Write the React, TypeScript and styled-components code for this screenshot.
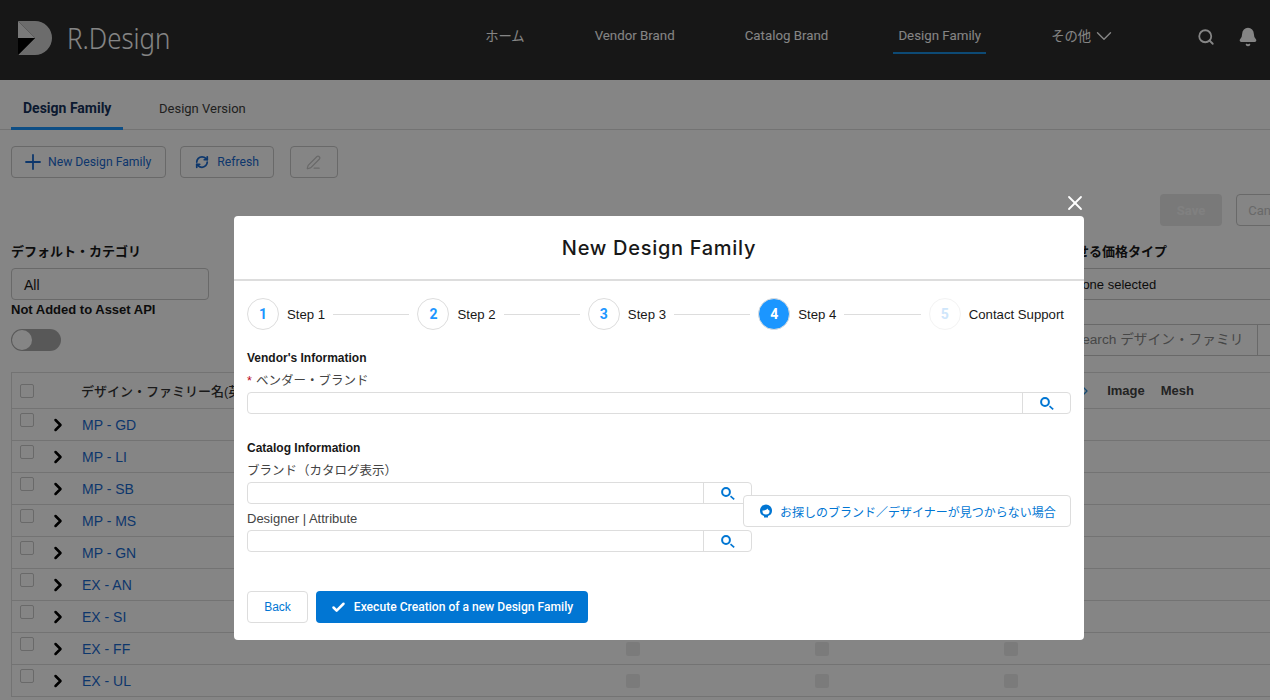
import styled, { createGlobalStyle } from 'styled-components';
import { Bell, ChevronDown, ChevronRight, PenLine, Plus, RefreshCw, Search, X, Check } from 'lucide-react';

const GlobalStyle = createGlobalStyle`
  html, body {
    margin: 0;
    padding: 0;
    height: 100%;
    overflow: hidden;
    background: #fff;
    font-family: Roboto, "Liberation Sans", "Noto Sans CJK JP", sans-serif;
  }
  * { box-sizing: border-box; }
`;

const Page = styled.div`
  width: 1270px;
  height: 700px;
  overflow: hidden;
  position: relative;
  background: #fff;
`;

const Header = styled.header`
  height: 80px;
  background: #2c2c2c;
  display: flex;
  align-items: flex-start;
  padding: 21px 12px 0 18px;
  color: #fff;
`;

const Brand = styled.div`
  display: flex;
  align-items: center;
  gap: 14px;
  height: 34px;
`;

const BrandName = styled.span`
  margin-top: -2px;
  font-family: "Noto Sans", sans-serif;
  font-weight: 300;
  font-size: 29px;
  color: #fff;
  transform: scaleX(0.89);
  transform-origin: left center;
`;

const Nav = styled.nav`
  display: flex;
  gap: 60px;
  margin-left: 297px;
  height: 34px;
`;

const NavItem = styled.a<{ $active?: boolean }>`
  display: flex;
  align-items: center;
  height: 33px;
  padding: 0 5px 2px;
  font-size: 13.3px;
  color: #fff;
  border-bottom: 2px solid ${p => (p.$active ? '#1a8fe0' : 'transparent')};
`;

const HeaderIcons = styled.div`
  margin-left: auto;
  display: flex;
  gap: 23px;
  align-items: center;
  height: 32px;
`;

const Tabs = styled.div`
  height: 50px;
  display: flex;
  padding-left: 11px;
  border-bottom: 1px solid #ddd;
`;

const Tab = styled.div<{ $active?: boolean }>`
  height: 50px;
  width: ${p => (p.$active ? '112px' : 'auto')};
  margin-right: ${p => (p.$active ? '36px' : '0')};
  padding: 0 ${p => (p.$active ? '12px' : '0')};
  line-height: 57px;
  font-size: ${p => (p.$active ? '14px' : '13px')};
  font-weight: ${p => (p.$active ? 700 : 400)};
  white-space: nowrap;
  color: ${p => (p.$active ? '#16325c' : '#3e3e3c')};
  border-bottom: ${p => (p.$active ? '3px solid #1b96ff' : 'none')};
`;

const Toolbar = styled.div`
  display: flex;
  gap: 14px;
  padding: 16px 11px 0;
  height: 64px;
`;

const ToolButton = styled.button`
  height: 32px;
  display: flex;
  align-items: center;
  justify-content: center;
  gap: 8px;
  padding: 0 14px;
  background: #fff;
  border: 1px solid #c9c9c9;
  border-radius: 4px;
  font: 12.2px Roboto, sans-serif;
  color: #1a6ad0;
`;

const NewButton = styled(ToolButton)`
  gap: 3px;
  padding: 0 14px 0 9px;
`;

const EditButton = styled(ToolButton)`
  width: 48px;
  margin-left: 2px;
  color: #c9c9c9;
`;

const SaveRow = styled.div`
  display: flex;
  justify-content: flex-end;
  gap: 14px;
  height: 32px;
  margin-right: -30px;
`;

const SaveButton = styled.button`
  width: 62px;
  height: 32px;
  border: none;
  border-radius: 4px;
  background: #e8e8e8;
  color: #f6f6f6;
  font: 700 13px Roboto, sans-serif;
`;

const CancelButton = styled.button`
  width: 64px;
  height: 32px;
  border: 1px solid #c9c9c9;
  border-radius: 4px;
  background: #fff;
  color: #c9c9c9;
  font: 13px Roboto, sans-serif;
`;

const Filters = styled.div`
  display: flex;
  justify-content: space-between;
  padding-left: 11px;
  margin-top: 17px;
`;

const FilterLabel = styled.div`
  font: 700 13px "Liberation Sans", "Noto Sans CJK JP", sans-serif;
  color: #181818;
  height: 18px;
  line-height: 18px;
  white-space: nowrap;
`;

const FilterBox = styled.div`
  width: 198px;
  height: 32px;
  margin-top: 7px;
  border: 1px solid #c9c9c9;
  border-radius: 4px;
  padding-left: 12px;
  font: 14px/32px "Liberation Sans", sans-serif;
  color: #181818;
`;

const WideFilterBox = styled(FilterBox)`
  width: 260px;
  padding-left: 35px;
  font-size: 13px;
`;

const PriceFilter = styled.div`
  width: 233px;
`;

const SubRow = styled.div`
  display: flex;
  justify-content: space-between;
  padding-left: 11px;
`;

const AssetLabel = styled.div`
  margin-top: 1px;
  font: 700 13px/18px "Liberation Sans", sans-serif;
  color: #181818;
`;

const Toggle = styled.div`
  width: 50px;
  height: 22px;
  margin-top: 10px;
  border-radius: 11px;
  background: #aaa;
  padding: 1px;
`;

const ToggleKnob = styled.div`
  width: 20px;
  height: 20px;
  border-radius: 50%;
  background: #fff;
`;

const SearchGroup = styled.div`
  width: 210px;
  height: 32px;
  margin-top: 24px;
  display: flex;
`;

const SearchBox = styled.div`
  flex: none;
  width: 198px;
  padding-left: 12px;
  border: 1px solid #c9c9c9;
  font: 13.7px/30px "Liberation Sans", "Noto Sans CJK JP", sans-serif;
  color: #888;
  white-space: nowrap;
`;

const SearchAddon = styled.div`
  flex: 1;
  border-top: 1px solid #c9c9c9;
  border-bottom: 1px solid #c9c9c9;
`;

const Table = styled.div`
  margin: 16px 0 0 11px;
  border-left: 1px solid #ddd;
  border-top: 1px solid #ddd;
`;

const Row = styled.div<{ $head?: boolean }>`
  height: ${p => (p.$head ? '36px' : '32px')};
  display: flex;
  align-items: center;
  border-bottom: 1px solid #ddd;
  font: ${p => (p.$head ? '700 13px' : '14px')} "Liberation Sans", "Noto Sans CJK JP", sans-serif;
  color: ${p => (p.$head ? '#444' : '#1a6ad0')};
`;

const CheckBox = styled.span<{ $head?: boolean }>`
  display: block;
  flex: none;
  width: 14px;
  height: 14px;
  margin: ${p => (p.$head ? '0' : '-10px')} 0 0 8px;
  border: 1px solid #c9c9c9;
  border-radius: 2px;
  background: #fff;
`;

const Expand = styled.span`
  display: flex;
  flex: none;
  width: 48px;
  padding-left: 14px;
  color: #000;
`;

const HeadName = styled.span`
  margin-left: 47px;
  font-weight: 500;
  color: #333;
`;

const GreyCells = styled.div`
  margin-left: auto;
  margin-right: 252px;
  display: flex;
  gap: 175px;
`;

const GreyCell = styled.span`
  width: 14px;
  height: 14px;
  border-radius: 2px;
  background: #ececec;
`;

const HeadExtras = styled.div`
  margin-left: auto;
  margin-right: 76px;
  display: flex;
  align-items: center;
  gap: 16px;
`;

const SortMark = styled.span`
  display: flex;
  margin-right: -2px;
  color: #2b8fd8;
`;

const Backdrop = styled.div`
  position: absolute;
  inset: 0;
  background: rgba(0, 0, 0, 0.48);
`;

const CloseButton = styled.span`
  position: absolute;
  left: 1063px;
  top: 191px;
  color: #fff;
  display: flex;
`;

const Modal = styled.div`
  position: absolute;
  left: 234px;
  top: 216px;
  width: 850px;
  height: 424px;
  background: #fff;
  border-radius: 4px;
  font-family: "Liberation Sans", "Noto Sans CJK JP", sans-serif;
`;

const ModalHeader = styled.div`
  height: 65px;
  border-bottom: 2px solid #ddd;
  text-align: center;
  font: 500 20px/64px Inter, sans-serif;
  letter-spacing: 0.7px;
  color: #181818;
`;

const ModalBody = styled.div`
  padding: 17px 13px 0;
`;

const Steps = styled.div`
  display: flex;
  align-items: center;
  height: 32px;
  margin-right: -1px;
`;

const StepCircle = styled.span<{ $active?: boolean; $future?: boolean }>`
  flex: none;
  width: 32px;
  height: 32px;
  border-radius: 50%;
  display: flex;
  align-items: center;
  justify-content: center;
  font: 700 14px Roboto, sans-serif;
  background: ${p => (p.$active ? '#1b96ff' : '#fff')};
  color: ${p => (p.$active ? '#fff' : p.$future ? '#cfe6fb' : '#1b96ff')};
  border: 1px solid ${p => (p.$future ? '#f3f3f3' : '#ddd')};
`;

const StepLabel = styled.span`
  flex: none;
  margin: 0 8px;
  font-size: 13.2px;
  color: #181818;
`;

const StepLine = styled.span`
  flex: 1;
  height: 1px;
  margin-right: 8px;
  background: #ddd;
`;

const SectionTitle = styled.div<{ $gap: number }>`
  margin-top: ${p => p.$gap}px;
  font-size: 12px;
  font-weight: 700;
  line-height: 16px;
  color: #181818;
`;

const FieldLabel = styled.div`
  margin-top: 7px;
  font-size: 12.5px;
  line-height: 16px;
  color: #444;
`;

const LatinLabel = styled(FieldLabel)`
  font-size: 13px;
`;

const Asterisk = styled.span`
  color: #ba0517;
  margin-right: 4px;
`;

const Lookup = styled.div<{ $width: number }>`
  width: ${p => p.$width}px;
  height: 22px;
  margin-top: 3px;
  display: flex;
  border: 1px solid #ddd;
  border-radius: 4px;
`;

const LookupInput = styled.div`
  flex: 1;
`;

const LookupButton = styled.span`
  width: 48px;
  border-left: 1px solid #ddd;
  display: flex;
  align-items: center;
  justify-content: center;
`;

const CatalogRow = styled.div`
  display: flex;
  align-items: center;
`;

const HelpButton = styled.button`
  flex: none;
  width: 328px;
  height: 32px;
  margin: 14px 0 0 -9px;
  position: relative;
  display: flex;
  align-items: center;
  gap: 7px;
  padding: 0 0 0 15px;
  background: #fff;
  border: 1px solid #ddd;
  border-radius: 4px;
  font: 12px "Liberation Sans", "Noto Sans CJK JP", sans-serif;
  color: #0176d3;
  white-space: nowrap;
  svg { flex: none; }
`;

const Footer = styled.div`
  display: flex;
  gap: 8px;
  margin-top: 39px;
`;

const BackButton = styled.button`
  width: 61px;
  height: 32px;
  background: #fff;
  border: 1px solid #ddd;
  border-radius: 4px;
  font: 12px "Liberation Sans", sans-serif;
  color: #0176d3;
`;

const ExecuteButton = styled.button`
  width: 272px;
  height: 32px;
  display: flex;
  align-items: center;
  justify-content: center;
  gap: 8px;
  background: #0176d3;
  border: none;
  border-radius: 4px;
  font: 500 12.1px Roboto, sans-serif;
  color: #fff;
  white-space: nowrap;
`;

const Logo = () => (
  <svg width="35" height="34" viewBox="0 0 35 34">
    <path d="M0 0h17a17 17 0 0 1 0 34H0l17-17z" fill="#d0d0d0" />
    <path d="M0 0l17 17H0z" fill="#e8e8e8" />
    <path d="M0 17h17L0 34z" fill="#000" />
  </svg>
);

const LookupIcon = () => (
  <svg width="14" height="13" viewBox="0 0 14 13" fill="none" stroke="#0176d3">
    <circle cx="5" cy="5" r="3.900" strokeWidth="2" />
    <path d="M9.500 9.200L13.200 12.300" strokeWidth="1.700" />
  </svg>
);

const AgentIcon = () => (
  <svg width="14" height="14" viewBox="0 0 14 14">
    <path d="M7 .5a6 6 0 0 1 6 6c0 2-.7 3.600-2 4.600-.6.5-1.400.8-2 1v1.400H5v-1.400c-.8-.2-1.500-.6-2-1-1.300-1-2-2.600-2-4.600a6 6 0 0 1 6-6z" fill="#0176d3" />
    <path d="M3.500 6.500C5.500 6.500 7.500 6 8.500 4.500c.4 1 1 1.700 2 2v1a3.500 3 0 0 1-7 0z" fill="#fff" />
  </svg>
);

const rows = ['MP - GD', 'MP - LI', 'MP - SB', 'MP - MS', 'MP - GN', 'EX - AN', 'EX - SI', 'EX - FF', 'EX - UL'];

const App = () => {
  return (
    <Page>
      <GlobalStyle />
      <Header>
        <Brand>
          <Logo />
          <BrandName>R.Design</BrandName>
        </Brand>
        <Nav>
          <NavItem>ホーム</NavItem>
          <NavItem>Vendor Brand</NavItem>
          <NavItem>Catalog Brand</NavItem>
          <NavItem $active>Design Family</NavItem>
          <NavItem>
            その他
            <ChevronDown size={26} strokeWidth={1.3} />
          </NavItem>
        </Nav>
        <HeaderIcons>
          <Search size={18} strokeWidth={2.4} />
          <Bell size={20} fill="#fff" />
        </HeaderIcons>
      </Header>
      <Tabs>
        <Tab $active>Design Family</Tab>
        <Tab>Design Version</Tab>
      </Tabs>
      <Toolbar>
        <NewButton>
          <Plus size={24} strokeWidth={1.8} />
          New Design Family
        </NewButton>
        <ToolButton>
          <RefreshCw size={14} strokeWidth={3} />
          Refresh
        </ToolButton>
        <EditButton>
          <PenLine size={15} />
        </EditButton>
      </Toolbar>
      <SaveRow>
        <SaveButton>Save</SaveButton>
        <CancelButton>Cancel</CancelButton>
      </SaveRow>
      <Filters>
        <div>
          <FilterLabel>デフォルト・カテゴリ</FilterLabel>
          <FilterBox>All</FilterBox>
        </div>
        <PriceFilter>
          <FilterLabel>表示させる価格タイプ</FilterLabel>
          <WideFilterBox>None selected</WideFilterBox>
        </PriceFilter>
      </Filters>
      <SubRow>
        <div>
          <AssetLabel>Not Added to Asset API</AssetLabel>
          <Toggle>
            <ToggleKnob />
          </Toggle>
        </div>
        <SearchGroup>
          <SearchBox>Search デザイン・ファミリ</SearchBox>
          <SearchAddon />
        </SearchGroup>
      </SubRow>
      <Table>
        <Row $head>
          <CheckBox $head />
          <HeadName>デザイン・ファミリー名(英語)</HeadName>
          <HeadExtras>
            <SortMark>
              <ChevronRight size={16} strokeWidth={2} />
            </SortMark>
            <span>Image</span>
            <span>Mesh</span>
          </HeadExtras>
        </Row>
        {rows.map(name => (
          <Row key={name}>
            <CheckBox />
            <Expand>
              <ChevronRight size={20} strokeWidth={3} />
            </Expand>
            {name}
            <GreyCells>
              <GreyCell />
              <GreyCell />
              <GreyCell />
            </GreyCells>
          </Row>
        ))}
      </Table>

      <Backdrop />
      <CloseButton>
        <X size={24} strokeWidth={1.8} />
      </CloseButton>
      <Modal>
        <ModalHeader>New Design Family</ModalHeader>
        <ModalBody>
          <Steps>
            <StepCircle>1</StepCircle>
            <StepLabel>Step 1</StepLabel>
            <StepLine />
            <StepCircle>2</StepCircle>
            <StepLabel>Step 2</StepLabel>
            <StepLine />
            <StepCircle>3</StepCircle>
            <StepLabel>Step 3</StepLabel>
            <StepLine />
            <StepCircle $active>4</StepCircle>
            <StepLabel>Step 4</StepLabel>
            <StepLine />
            <StepCircle $future>5</StepCircle>
            <StepLabel>Contact Support</StepLabel>
          </Steps>
          <SectionTitle $gap={20}>Vendor's Information</SectionTitle>
          <FieldLabel>
            <Asterisk>*</Asterisk>ベンダー・ブランド
          </FieldLabel>
          <Lookup $width={824}>
            <LookupInput />
            <LookupButton>
              <LookupIcon />
            </LookupButton>
          </Lookup>
          <SectionTitle $gap={26}>Catalog Information</SectionTitle>
          <CatalogRow>
            <div>
              <FieldLabel>ブランド（カタログ表示）</FieldLabel>
              <Lookup $width={505}>
                <LookupInput />
                <LookupButton>
                  <LookupIcon />
                </LookupButton>
              </Lookup>
              <LatinLabel>Designer | Attribute</LatinLabel>
              <Lookup $width={505}>
                <LookupInput />
                <LookupButton>
                  <LookupIcon />
                </LookupButton>
              </Lookup>
            </div>
            <HelpButton>
              <AgentIcon />
              お探しのブランド／デザイナーが見つからない場合
            </HelpButton>
          </CatalogRow>
          <Footer>
            <BackButton>Back</BackButton>
            <ExecuteButton>
              <Check size={15} strokeWidth={4} />
              Execute Creation of a new Design Family
            </ExecuteButton>
          </Footer>
        </ModalBody>
      </Modal>
    </Page>
  );
};

export default App;
